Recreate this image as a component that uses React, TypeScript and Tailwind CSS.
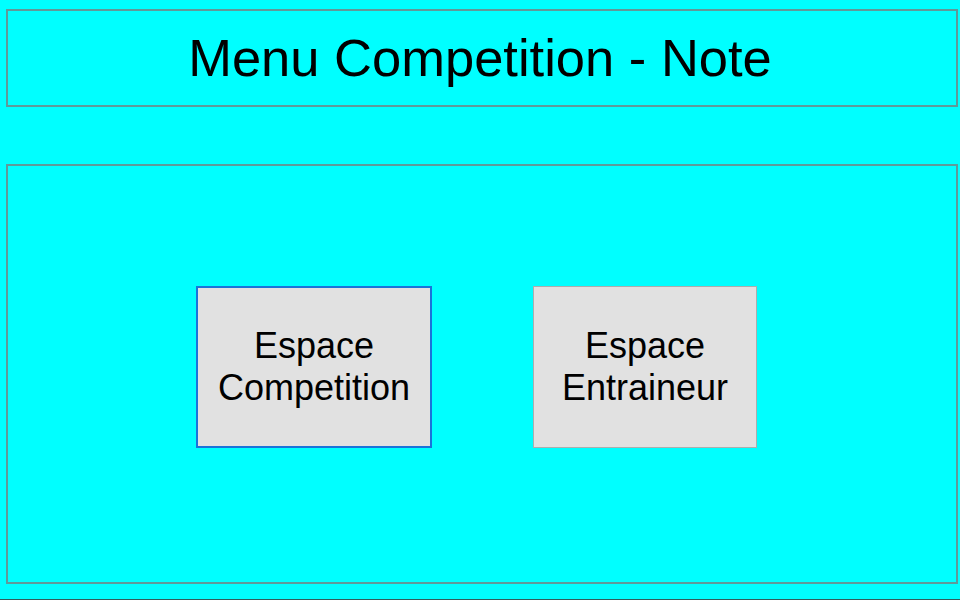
export default function App() {
  return (
    <div className="w-[960px] h-[600px] bg-[#00ffff] border-b border-[#2f5f5f] overflow-hidden font-['Liberation_Sans',Arial,sans-serif] text-black">
      {/* Titre */}
      <div className="ml-[6px] mt-[9px] w-[952px] h-[98px] border-2 border-[#5f9a9a] flex items-center justify-center">
        <h1 className="text-[52.5px] leading-none font-normal pr-[4px]">Menu Competition - Note</h1>
      </div>

      {/* Panneau principal */}
      <div className="ml-[6px] mt-[57px] w-[952px] h-[420px] border-2 border-[#5f9a9a] flex items-start pl-[188px] pt-[120px] gap-[101px]">
        <button className="w-[236px] h-[162px] bg-[#e1e1e1] border-2 border-[#1a73d9] text-[36px] leading-[42px] flex flex-col items-center justify-center">
          <span>Espace</span>
          <span>Competition</span>
        </button>
        <button className="w-[224px] h-[162px] bg-[#e1e1e1] border border-[#adadad] text-[36px] leading-[42px] flex flex-col items-center justify-center">
          <span>Espace</span>
          <span>Entraineur</span>
        </button>
      </div>
    </div>
  );
}
